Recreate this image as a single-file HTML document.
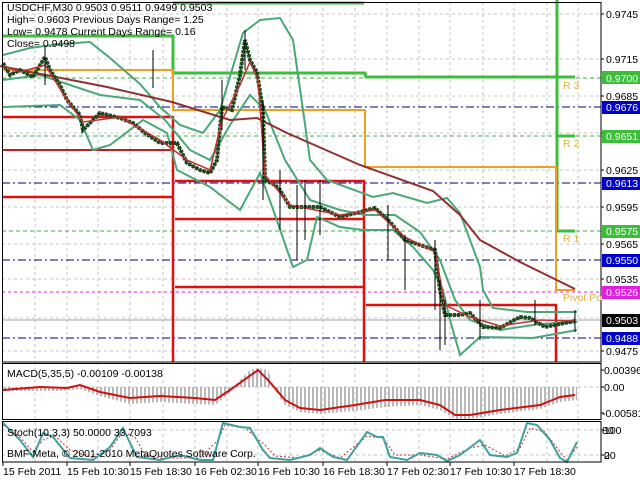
<!DOCTYPE html>
<html><head><meta charset="utf-8"><style>
html,body{margin:0;padding:0;background:#fff;width:640px;height:480px;overflow:hidden}
svg{display:block}
text{font-family:"Liberation Sans",sans-serif;font-size:10.5px;fill:#000}
</style></head><body>
<svg width="640" height="480" viewBox="0 0 640 480" xmlns="http://www.w3.org/2000/svg">
<defs>
<pattern id="hist" width="4" height="10" patternUnits="userSpaceOnUse"><rect x="0" y="0" width="2" height="10" fill="#b8b8b8"/></pattern>
</defs>
<rect width="640" height="480" fill="#fff"/>
<g stroke="#c4c4c4" stroke-dasharray="3 3" stroke-width="1">
<path d="M35 2V462M67 2V462M98 2V462M130 2V462M163 2V462M195 2V462M227 2V462M258 2V462M290 2V462M323 2V462M355 2V462M387 2V462M419 2V462M450 2V462M483 2V462M514 2V462M547 2V462M578 2V462"/>
<path d="M2 14H601M2 59H601M2 96H601M2 133H601M2 170H601M2 207H601M2 244H601M2 279H601M2 318H601M2 351H601M2 387H601M2 430H601M2 455H601"/>
</g>
<g stroke="#000080" stroke-dasharray="8 3 2 3" stroke-width="1">
<path d="M2 107H601M2 183H601M2 260H601M2 338H601"/>
</g>
<g stroke="#3cb43c" stroke-dasharray="4 3" stroke-width="1"><path d="M2 78H601M2 136H601M2 231H601"/></g>
<path d="M2 292H601" stroke="#e020e0" stroke-dasharray="3 3"/>
<path d="M2 320H601" stroke="#a0a0a0"/>
<g stroke="#3cbe3c" stroke-width="3" fill="none">
<path d="M3 36H173V73H365L366 77H557"/>
<path d="M173 3H364"/>
<path d="M557 0V231H575M557 136H575M557 77H575"/>
</g>
<path d="M3 70H173V110H365V167H556V290H575" stroke="#f0a020" stroke-width="2" fill="none"/>
<g stroke="#e01010" stroke-width="2.5" fill="none">
<path d="M3 117H173V362"/>
<path d="M3 197H173"/>
<path d="M175 181H364V362"/>
<path d="M175 219H364"/>
<path d="M175 287H364"/>
<path d="M366 305H556V362"/>
</g>
<path d="M3 150H173" stroke="#c02020" stroke-width="2"/>
<g stroke="#4aa878" stroke-width="2" fill="none">
<path d="M3 55L30 48L60 44L90 42L110 58L140 84L160 107L180 125L203 133L220 110L243 33L260 20L280 18L293 40L303 110L310 160L327 180L373 197L393 193L427 203L447 198L460 213L480 267L483 290L493 308L527 312L577 312"/>
<path d="M3 107L60 105L80 120L93 150L110 145L143 120L167 133L177 170L210 187L240 210L260 173L275 215L293 267L307 260L317 217L340 227L363 230L393 230L413 247L433 270L443 290L450 320L460 355L480 337L533 338L577 330"/>
<path d="M3 80L40 75L70 85L100 95L140 100L165 120L190 150L210 160L230 125L250 95L265 110L285 160L310 200L340 210L365 215L395 215L420 232L440 260L455 300L470 320L500 330L540 324L577 322"/>
</g>
<path d="M0 66L107 87L172 102L230 120L257 118L287 133L360 165L433 191L460 215L480 240L520 262L575 289" stroke="#903030" stroke-width="2" fill="none"/>
<g fill="none">
<path d="M3 63L10 75L20 70L33 77L45 57L50 70L60 85L67 100L80 115L83 130L93 120L100 113L120 118L133 123L145 133L160 143L177 143L187 163L200 170L210 173L217 160L222 107L232 110L240 75L245 40L250 60L257 73L263 110L265 180L275 185L280 190L290 207L320 207L340 217L360 212L375 208L390 222L405 240L420 245L435 250L440 290L445 315L460 315L470 313L483 327L500 328L520 317L530 318L545 327L575 321" stroke="#000" stroke-width="1"/>
<path d="M3 63L10 75L20 70L33 77L45 57L50 70L60 85L67 100L80 115L83 130L93 120L100 113L120 118L133 123L145 133L160 143L177 143L187 163L200 170L210 173L217 160L222 107L232 110L240 75L245 40L250 60L257 73L263 110L265 180L275 185L280 190L290 207L320 207L340 217L360 212L375 208L390 222L405 240L420 245L435 250L440 290L445 315L460 315L470 313L483 327L500 328L520 317L530 318L545 327L575 321" stroke="#1e4a1e" stroke-width="4" stroke-dasharray="3 1"/>
<path d="M3 66L20 72L45 65L67 100L83 122L120 117L160 140L187 160L210 170L222 120L240 85L250 62L258 80L265 175L290 205L340 215L375 210L405 237L435 252L445 305L470 317L500 326L540 320L575 321" stroke="#c03030" stroke-width="1.5"/>
<path d="M45 47V85M153 50V88M222 80V130M245 30V70M263 100V200M280 170V230M297 185V260M305 180V240M320 180V235M388 205V260M405 235V290M435 240V310M440 280V350M445 300V345M480 300V340M535 300V325M575 310V332" stroke="#000" stroke-width="1"/>
</g>
<rect x="2.5" y="2.5" width="598.5" height="359.5" fill="none" stroke="#000"/>
<polygon points="3,387 3,391 60,391 80,389 100,396 130,404 160,402 195,404 215,405 230,393 240,380 250,370 258,368 268,370 275,390 285,405 300,412 320,414 355,411 385,407 420,405 440,410 455,419 470,419 500,414 540,409 560,402 577,400 577,387" fill="url(#hist)"/>
<path d="M3 390L40 387L67 388L80 385L100 392L130 398L160 396L195 398L215 400L230 390L258 370L268 380L285 400L300 408L320 410L355 405L385 400L420 400L440 405L455 415L470 415L500 410L540 405L560 397L575 395" stroke="#d01010" stroke-width="2" fill="none"/>
<rect x="2.5" y="363.5" width="598.5" height="56" fill="none" stroke="#000"/>
<text x="7" y="377">MACD(5,35,5) -0.00109 -0.00138</text>
<path d="M3 425L20 437L33 452L43 440L55 436L70 450L93 458L110 450L123 432L135 437L145 455L160 458L200 458L218 440L225 425L245 428L265 445L275 456L300 458L320 450L340 458L367 436L383 438L395 455L420 455L447 459L470 448L485 445L505 456L520 448L530 428L545 432L560 452L567 460L577 447" stroke="#c03030" stroke-width="1" stroke-dasharray="2 2" fill="none"/>
<path d="M3 423L20 440L33 457L43 433L53 437L65 452L70 458L93 460L110 447L123 428L130 443L137 457L160 460L180 455L200 460L213 460L223 423L240 427L250 428L263 450L270 458L290 460L310 455L320 448L333 457L347 460L367 432L377 437L383 437L390 457L407 460L420 453L437 455L447 461L460 455L480 440L490 455L507 457L517 453L527 423L537 425L550 440L560 458L567 462L577 442" stroke="#3fa0a0" stroke-width="2" fill="none"/>
<rect x="2.5" y="421.5" width="598.5" height="40.5" fill="none" stroke="#000"/>
<text x="7" y="436">Stoch(10,3,3) 50.0000 33.7093</text>
<text x="7" y="457">BMF-Meta, © 2001-2010 MetaQuotes Software Corp.</text>
<text x="7" y="11">USDCHF,M30  0.9503 0.9511 0.9499 0.9503</text>
<text x="7" y="23">High= 0.9603   Previous Days Range= 1.25</text>
<text x="7" y="35">Low= 0.9478   Current Days Range= 0.16</text>
<text x="7" y="47">Close= 0.9498</text>
<g style="font-size:10px"><text x="563" y="89" style="fill:#e0b040">R 3</text>
<text x="563" y="147" style="fill:#e0b040">R 2</text>
<text x="563" y="242" style="fill:#e0b040">R 1</text>
<text x="563" y="301" style="fill:#e0b040">Pivot Po</text></g>
<rect x="602" y="0" width="38" height="480" fill="#fff"/>
<g stroke="#000"><path d="M601 14h3M601 59h3M601 96h3M601 133h3M601 170h3M601 207h3M601 244h3M601 279h3M601 351h3M601 370h3M601 387h3M601 413h3M601 430h3M601 455h3"/></g>
<rect x="602" y="71" width="38" height="13" fill="#3cbe3c"/>
<rect x="602" y="101" width="38" height="13" fill="#0000c8"/>
<rect x="602" y="130" width="38" height="13" fill="#3cbe3c"/>
<rect x="602" y="177" width="38" height="13" fill="#0000c8"/>
<rect x="602" y="225" width="38" height="13" fill="#3cbe3c"/>
<rect x="602" y="254" width="38" height="13" fill="#0000c8"/>
<rect x="602" y="286" width="38" height="13" fill="#e020e0"/>
<rect x="602" y="314" width="38" height="13" fill="#000"/>
<rect x="602" y="332" width="38" height="13" fill="#0000c8"/>
<g style="font-size:10.5px">
<text x="606" y="18">0.9745</text>
<text x="606" y="63">0.9715</text>
<text x="606" y="82" style="fill:#fff">0.9700</text>
<text x="606" y="100">0.9685</text>
<text x="606" y="111" style="fill:#fff">0.9676</text>
<text x="606" y="140" style="fill:#fff">0.9651</text>
<text x="606" y="174">0.9625</text>
<text x="606" y="187" style="fill:#fff">0.9613</text>
<text x="606" y="211">0.9595</text>
<text x="606" y="235" style="fill:#fff">0.9575</text>
<text x="606" y="248">0.9565</text>
<text x="606" y="264" style="fill:#fff">0.9550</text>
<text x="606" y="283">0.9535</text>
<text x="606" y="296" style="fill:#fff">0.9526</text>
<text x="606" y="324" style="fill:#fff">0.9503</text>
<text x="606" y="342" style="fill:#fff">0.9488</text>
<text x="606" y="355">0.9475</text>
<text x="604" y="374">0.00396</text>
<text x="604" y="391">0.00</text>
<text x="602" y="417">-0.00581</text>
<text x="604" y="434">100</text>
<text x="602" y="434">80</text>
<text x="604" y="459">20</text>
<text x="604" y="459">0</text>
</g>
<g style="font-size:10.5px">
<text x="3" y="475">15 Feb 2011</text>
<text x="67" y="475">15 Feb 10:30</text>
<text x="130" y="475">15 Feb 18:30</text>
<text x="195" y="475">16 Feb 02:30</text>
<text x="258" y="475">16 Feb 10:30</text>
<text x="323" y="475">16 Feb 18:30</text>
<text x="387" y="475">17 Feb 02:30</text>
<text x="450" y="475">17 Feb 10:30</text>
<text x="514" y="475">17 Feb 18:30</text>
</g>
<path d="M3 462v4M67 462v4M130 462v4M195 462v4M258 462v4M323 462v4M387 462v4M450 462v4M514 462v4" stroke="#000"/>
</svg>
</body></html>
